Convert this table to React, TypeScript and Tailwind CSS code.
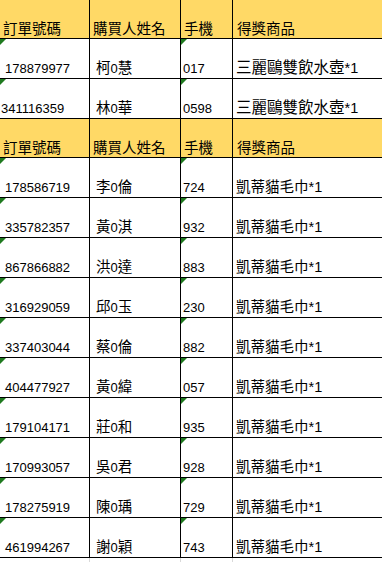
import React from "react";

type Row = [string, string, string, string];

const table1: Row[] = [
  ["178879977", "柯0慧", "017", "三麗鷗雙飲水壺*1"],
  ["341116359", "林0華", "0598", "三麗鷗雙飲水壺*1"],
];

const table2: Row[] = [
  ["178586719", "李0倫", "724", "凱蒂貓毛巾*1"],
  ["335782357", "黃0淇", "932", "凱蒂貓毛巾*1"],
  ["867866882", "洪0達", "883", "凱蒂貓毛巾*1"],
  ["316929059", "邱0玉", "230", "凱蒂貓毛巾*1"],
  ["337403044", "蔡0倫", "882", "凱蒂貓毛巾*1"],
  ["404477927", "黃0緯", "057", "凱蒂貓毛巾*1"],
  ["179104171", "莊0和", "935", "凱蒂貓毛巾*1"],
  ["170993057", "吳0君", "928", "凱蒂貓毛巾*1"],
  ["178275919", "陳0瑀", "729", "凱蒂貓毛巾*1"],
  ["461994267", "謝0穎", "743", "凱蒂貓毛巾*1"],
];

function Txt({ t, big, wide }: { t: string; big?: boolean; wide?: boolean }) {
  const parts = t.split(/([\u0000-\u007f]+)/).filter(Boolean);
  return (
    <>
      {parts.map((s, i) =>
        /^[\u0000-\u007f]+$/.test(s) ? (
          <span
            key={i}
            className={
              wide
                ? "font-['Liberation_Sans',sans-serif] text-[14.5px]"
                : "font-['Liberation_Sans',sans-serif] text-[13px]"
            }
          >
            {s}
          </span>
        ) : (
          <span
            key={i}
            className={
              big
                ? "font-['Noto_Sans_CJK_TC',sans-serif] text-[15.5px]"
                : "font-['Noto_Sans_CJK_TC',sans-serif] text-[14.5px]"
            }
          >
            {s}
          </span>
        )
      )}
    </>
  );
}

function Tri() {
  return (
    <svg className="absolute left-0 top-0" width="6" height="6" viewBox="0 0 6 6">
      <polygon points="0,0 6,0 0,6" fill="#1f7a1f" />
    </svg>
  );
}

function Header() {
  const h = ["訂單號碼", "購買人姓名", "手機", "得獎商品"];
  return (
    <div className="grid h-[39px] grid-cols-[90px_91px_52px_1fr] border-b border-black bg-[#ffd966]">
      {h.map((t, i) => (
        <div
          key={i}
          className={
            i < 3
              ? "flex items-end border-r border-black pb-[1px] pl-[3px] leading-[17px] text-black"
              : "flex items-end pb-[1px] pl-[4px] leading-[17px] text-black"
          }
        >
          <span>
            <Txt t={t} />
          </span>
        </div>
      ))}
    </div>
  );
}

function DataRow({ r, big, first }: { r: Row; big?: boolean; first?: boolean }) {
  return (
    <div className="grid h-[40px] grid-cols-[90px_91px_52px_1fr] border-b border-black bg-white text-black">
      <div
        className={
          first === false
            ? "relative flex items-end border-r border-black pb-[1px] pl-[1px] leading-[17px]"
            : "relative flex items-end border-r border-black pb-[1px] pl-[5px] leading-[17px]"
        }
      >
        <Tri />
        <span>
          <Txt t={r[0]} />
        </span>
      </div>
      <div className="flex items-end border-r border-black pb-[1px] pl-[6px] leading-[17px]">
        <span>
          <Txt t={r[1]} />
        </span>
      </div>
      <div className="relative flex items-end border-r border-black pb-[1px] pl-[2px] leading-[17px]">
        <Tri />
        <span>
          <Txt t={r[2]} />
        </span>
      </div>
      <div className="flex items-end pb-[1px] pl-[3px] leading-[17px]">
        <span>
          <Txt t={r[3]} big={big} wide />
        </span>
      </div>
    </div>
  );
}

export default function App() {
  return (
    <div className="flex h-[562px] w-[382px] flex-col overflow-hidden bg-white">
      <Header />
      {table1.map((r, i) => (
        <DataRow key={"a" + i} r={r} big first={i === 0} />
      ))}
      <Header />
      {table2.map((r, i) => (
        <DataRow key={"b" + i} r={r} />
      ))}
      <div className="grid flex-1 grid-cols-[90px_91px_52px_1fr]">
        <div className="border-r border-[#d9d9d9]" />
        <div className="border-r border-[#d9d9d9]" />
        <div className="border-r border-[#d9d9d9]" />
        <div />
      </div>
    </div>
  );
}
